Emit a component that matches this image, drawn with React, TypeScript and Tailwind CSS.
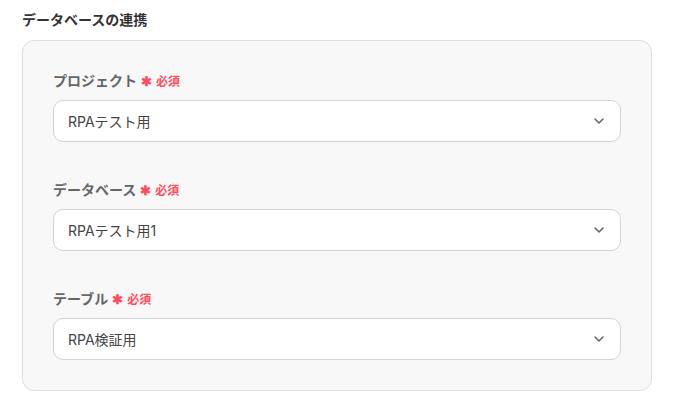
import { ChevronDown } from "lucide-react";

const fields = [
  { label: "プロジェクト", value: "RPAテスト用" },
  { label: "データベース", value: "RPAテスト用1" },
  { label: "テーブル", value: "RPA検証用" },
];

function Field({ label, value }: { label: string; value: string }) {
  return (
    <div>
      <div className="flex h-5 items-baseline text-[14px] leading-5">
        <span className="font-bold text-[#666]">{label}</span>
        <span className="ml-[4px] text-[13px] font-bold text-[#ff4d5e]">✱</span>
        <span className="ml-[4px] text-[12px] font-bold text-[#ff4d5e]">必須</span>
      </div>
      <div className="mt-[9px] flex h-[42px] items-center justify-between rounded-[10px] border border-[#cfd3dc] bg-white pl-[14px] pr-[13px]">
        <span className="text-[14px] text-[#444]">{value}</span>
        <ChevronDown className="h-[16px] w-[16px] text-[#666]" strokeWidth={2.4} />
      </div>
    </div>
  );
}

export default function App() {
  return (
    <div className="h-[405px] w-[676px] bg-white px-[22px] pt-[10px] font-['Inter','Noto_Sans_CJK_JP',sans-serif]">
      <h2 className="h-5 text-[14px] leading-5 font-bold text-[#333]">データベースの連携</h2>
      <div className="mt-[10px] flex w-[630px] flex-col gap-[38px] rounded-[12px] border border-[#dedede] bg-[#f8f8f8] px-[30px] py-[30px]">
        {fields.map((f) => (
          <Field key={f.label} {...f} />
        ))}
      </div>
    </div>
  );
}
